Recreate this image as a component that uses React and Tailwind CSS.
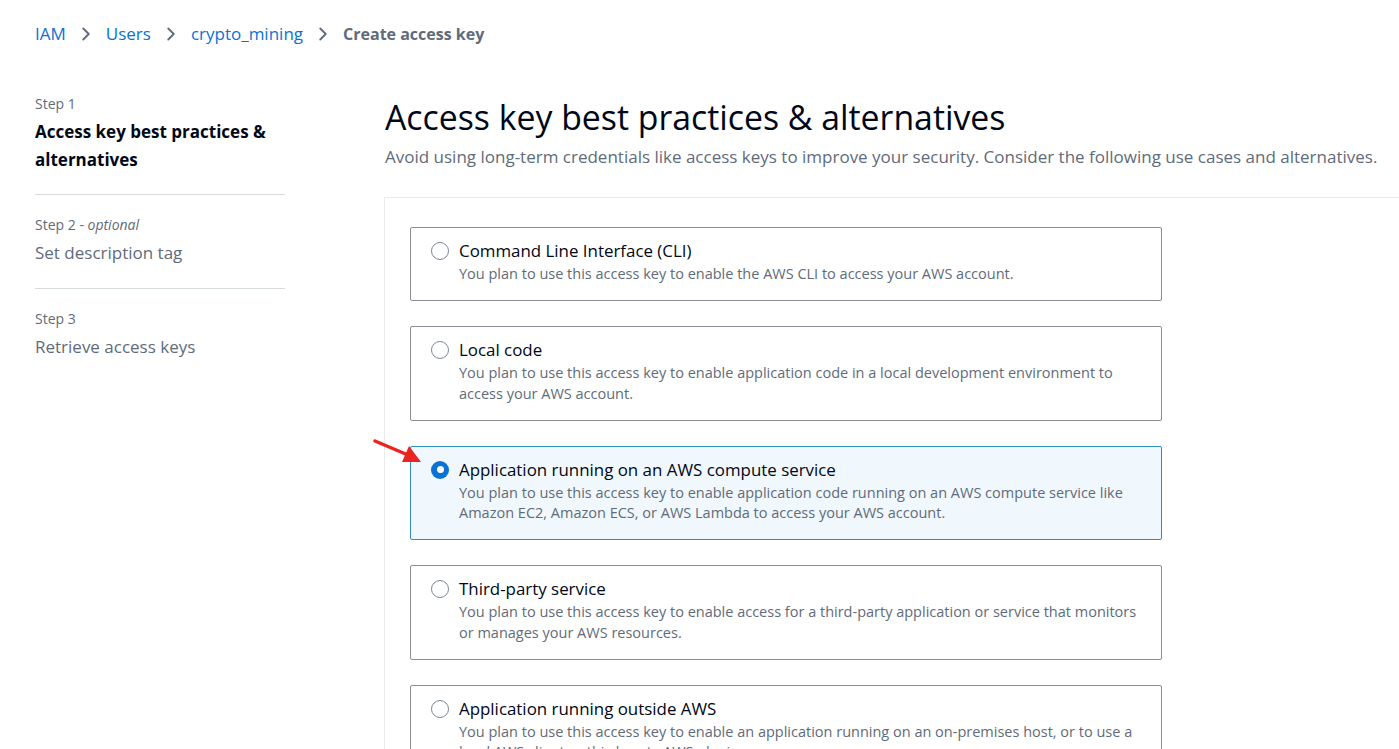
import { FiChevronRight } from 'react-icons/fi';

const options = [
  {
    title: 'Command Line Interface (CLI)',
    desc: ['You plan to use this access key to enable the AWS CLI to access your AWS account.'],
  },
  {
    title: 'Local code',
    desc: [
      'You plan to use this access key to enable application code in a local development environment to',
      'access your AWS account.',
    ],
  },
  {
    title: 'Application running on an AWS compute service',
    desc: [
      'You plan to use this access key to enable application code running on an AWS compute service like',
      'Amazon EC2, Amazon ECS, or AWS Lambda to access your AWS account.',
    ],
    selected: true,
  },
  {
    title: 'Third-party service',
    desc: [
      'You plan to use this access key to enable access for a third-party application or service that monitors',
      'or manages your AWS resources.',
    ],
  },
  {
    title: 'Application running outside AWS',
    desc: [
      'You plan to use this access key to enable an application running on an on-premises host, or to use a',
      'local AWS client or third-party AWS plugin.',
    ],
  },
];

const steps = [
  { label: 'Step 1', name: 'Access key best practices & alternatives', active: true },
  { label: 'Step 2', optional: true, name: 'Set description tag' },
  { label: 'Step 3', name: 'Retrieve access keys' },
];

const Radio = ({ checked }) =>
  checked ? (
    <span className="mt-[2px] flex h-[18px] w-[18px] shrink-0 items-center justify-center rounded-full bg-[#0972d3]">
      <span className="h-[7px] w-[7px] rounded-full bg-white" />
    </span>
  ) : (
    <span className="mt-[2px] h-[18px] w-[18px] shrink-0 rounded-full border-[1.5px] border-[#7d8998] bg-white" />
  );

const App = () => {
  return (
    <div className="relative h-[749px] overflow-hidden bg-white font-['Open_Sans',sans-serif] text-[#000716]">
      {/* Breadcrumb */}
      <nav className="flex h-[68px] items-center pl-[35px] text-[17px]">
        <span className="text-[#0972d3]">IAM</span>
        <FiChevronRight className="mx-[9px] text-[22px] text-[#5f6b7a]" />
        <span className="text-[#0972d3]">Users</span>
        <FiChevronRight className="mx-[9px] text-[22px] text-[#5f6b7a]" />
        <span className="text-[#0972d3]">crypto_mining</span>
        <FiChevronRight className="mx-[9px] text-[22px] text-[#5f6b7a]" />
        <span className="text-[16px] font-bold text-[#5f6b7a]">Create access key</span>
      </nav>

      <div className="flex">
        {/* Steps */}
        <aside className="ml-[35px] w-[250px] shrink-0 pt-[24px]">
          {steps.map((step, i) => (
            <div
              key={step.label}
              className={`${i > 0 ? 'border-t border-[#d5dbdb] pt-[18px]' : ''} ${i === 0 ? 'pb-[20px]' : i === 1 ? 'pb-[21px]' : ''}`}
            >
              <div className="text-[14px] leading-[24px] text-[#5f6b7a]">
                {step.label}
                {step.optional && (
                  <>
                    {' - '}
                    <i>optional</i>
                  </>
                )}
              </div>
              <div
                className={`mt-[2px] text-[17px] leading-[28px] ${step.active ? 'font-bold text-[#000716]' : 'text-[#5f6b7a]'}`}
              >
                {step.name}
              </div>
            </div>
          ))}
        </aside>

        {/* Main */}
        <main className="ml-[100px] flex-1">
          <h1 className="mt-[27px] text-[33.8px] leading-[44px] text-[#000716]">
            Access key best practices &amp; alternatives
          </h1>
          <p className="mt-[6px] whitespace-nowrap text-[17px] leading-[24px] text-[#5f6b7a]">
            Avoid using long-term credentials like access keys to improve your security. Consider the following use cases and alternatives.
          </p>

          <div className="mt-[28px] -ml-px flex flex-col gap-[25px] border-l border-t border-[#e9ebed] pl-[25px] pt-[29px]">
            {options.map((opt) => (
              <div
                key={opt.title}
                className={`flex w-[752px] gap-[10px] rounded-[2px] border pb-[15.5px] pl-[20px] pr-[20px] pt-[12px] ${
                  opt.selected ? 'border-[#2f8fb8] bg-[#f1f8fd]' : 'border-[#8c8c94] bg-white'
                }`}
              >
                <Radio checked={opt.selected} />
                <div>
                  <div className="text-[16.9px] leading-[22px] text-[#000716]">{opt.title}</div>
                  <div className="mt-[2px] whitespace-nowrap text-[14.5px] leading-[20.5px] text-[#5f6b7a]">
                    {opt.desc.map((line) => (
                      <div key={line}>{line}</div>
                    ))}
                  </div>
                </div>
              </div>
            ))}
          </div>
        </main>
      </div>

      {/* Red annotation arrow */}
      <svg className="absolute left-[368px] top-[434px]" width="60" height="34" viewBox="0 0 60 34">
        <line x1="7" y1="7" x2="40" y2="21" stroke="#e8251f" strokeWidth="3.5" strokeLinecap="round" />
        <polygon points="53,28 34,28 41,12" fill="#e8251f" />
      </svg>
    </div>
  );
};

export default App;
